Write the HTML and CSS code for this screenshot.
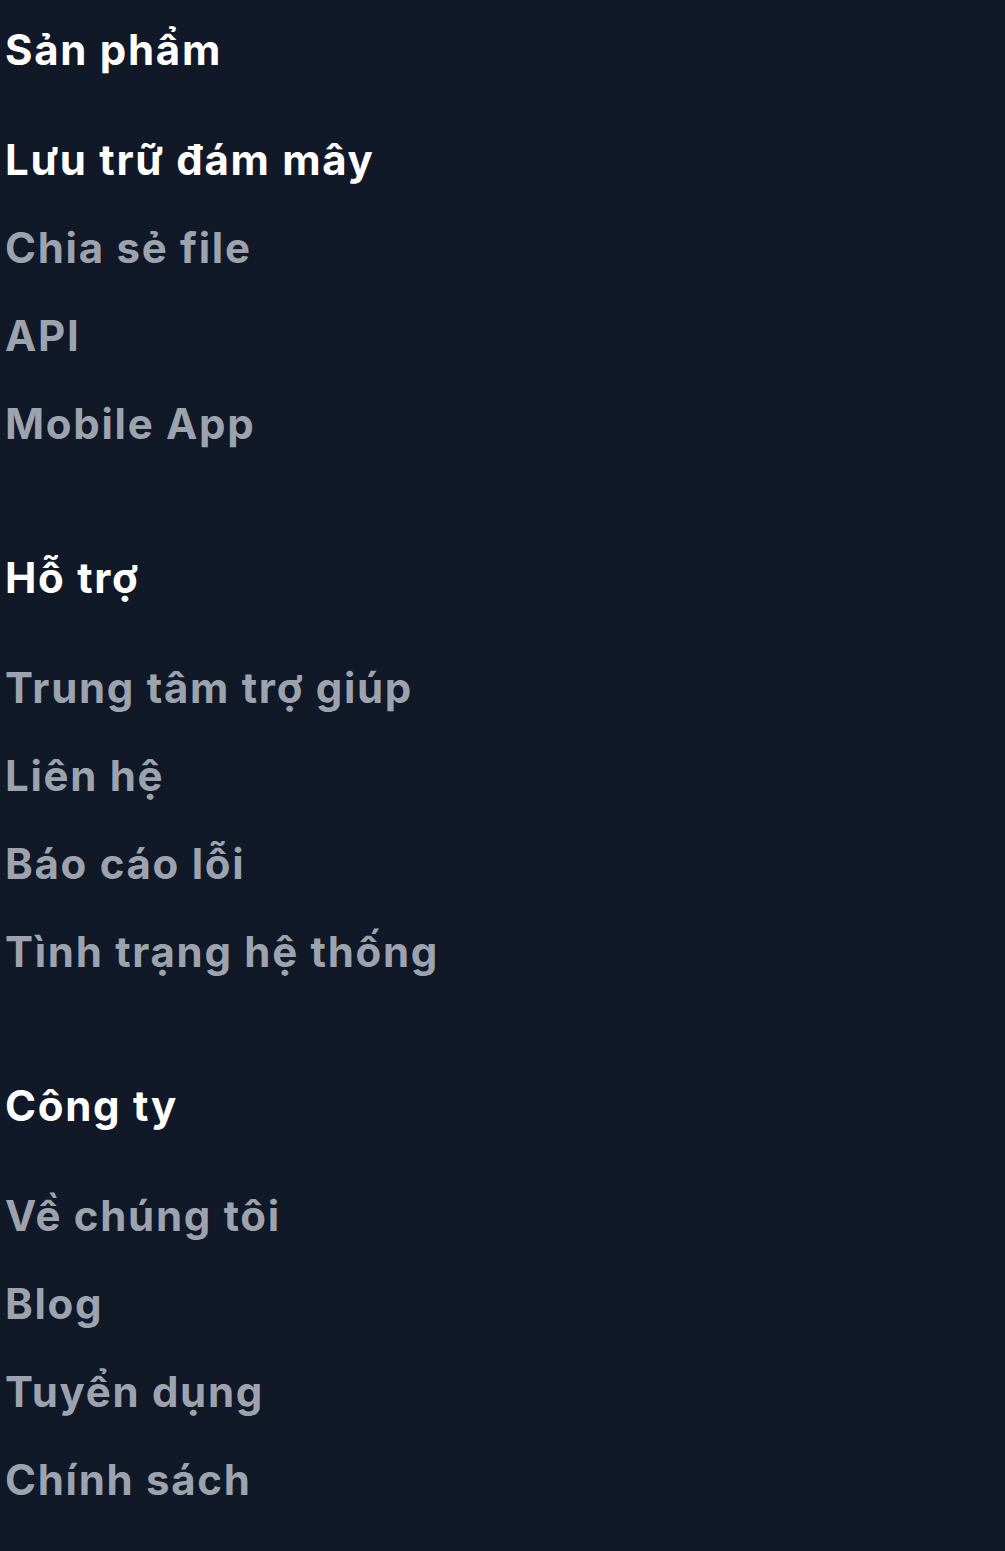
FILE: index.html
```html
<!DOCTYPE html>
<html lang="vi">
<head>
<meta charset="utf-8">
<title>Footer</title>
<link rel="stylesheet" href="styles.css">
</head>
<body>
<footer class="footer">
  <section class="col">
    <h3 class="col-title">Sản phẩm</h3>
    <ul class="links">
      <li><a class="link link-active" href="#">Lưu trữ đám mây</a></li>
      <li><a class="link" href="#">Chia sẻ file</a></li>
      <li><a class="link" href="#">API</a></li>
      <li><a class="link" href="#">Mobile App</a></li>
    </ul>
  </section>
  <section class="col">
    <h3 class="col-title">Hỗ trợ</h3>
    <ul class="links">
      <li><a class="link" href="#">Trung tâm trợ giúp</a></li>
      <li><a class="link" href="#">Liên hệ</a></li>
      <li><a class="link" href="#">Báo cáo lỗi</a></li>
      <li><a class="link" href="#">Tình trạng hệ thống</a></li>
    </ul>
  </section>
  <section class="col">
    <h3 class="col-title">Công ty</h3>
    <ul class="links">
      <li><a class="link" href="#">Về chúng tôi</a></li>
      <li><a class="link" href="#">Blog</a></li>
      <li><a class="link" href="#">Tuyển dụng</a></li>
      <li><a class="link" href="#">Chính sách</a></li>
    </ul>
  </section>
</footer>
</body>
</html>
```
FILE: styles.css
```css
html, body {
  margin: 0;
  padding: 0;
  background: #111827;
}
body {
  font-family: Inter, "Noto Sans", "Liberation Sans", sans-serif;
  font-size: 42px;
  line-height: 60px;
  font-weight: 700;
  letter-spacing: 1.7px;
  color: #9ca3af;
}
.footer {
  display: flex;
  flex-direction: column;
  gap: 94px;
  padding: 20px 5px 41px;
}
.col-title {
  margin: 0 0 50px;
  font-size: 42px;
  line-height: 60px;
  font-weight: 700;
  color: #ffffff;
}
.links {
  list-style: none;
  margin: 0;
  padding: 0;
  display: flex;
  flex-direction: column;
  gap: 28px;
}
.link {
  color: #9ca3af;
  text-decoration: none;
}
.link-active {
  color: #ffffff;
}
```
